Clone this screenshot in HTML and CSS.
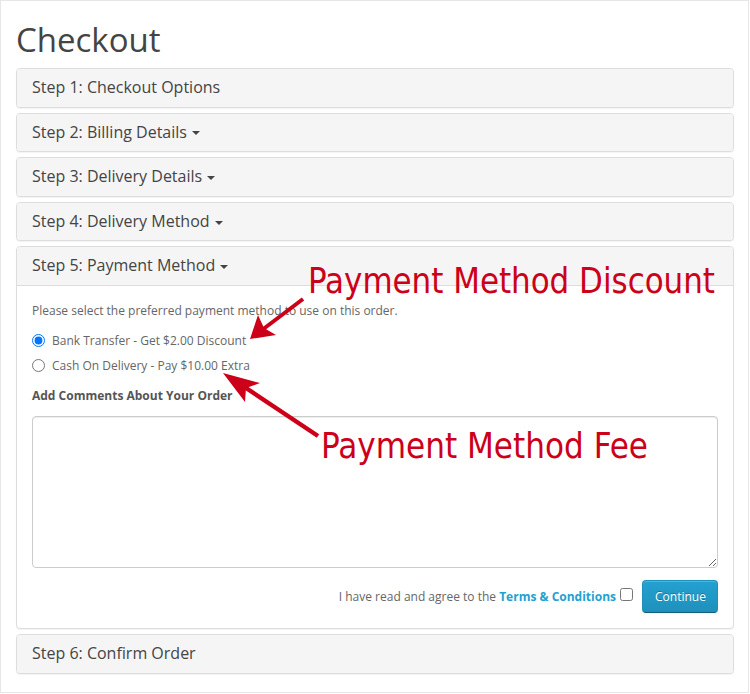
FILE: index.html
```html
<!DOCTYPE html>
<html lang="en">
<head>
<meta charset="utf-8">
<title>Checkout</title>
<link rel="stylesheet" href="styles.css">
</head>
<body>
<div class="frame">
  <h1 class="page-title">Checkout</h1>
  <div class="panel-group">
    <div class="panel">
      <div class="panel-heading"><h4 class="panel-title">Step 1: Checkout Options</h4></div>
    </div>
    <div class="panel">
      <div class="panel-heading"><h4 class="panel-title">Step 2: Billing Details <span class="caret"></span></h4></div>
    </div>
    <div class="panel">
      <div class="panel-heading"><h4 class="panel-title">Step 3: Delivery Details <span class="caret"></span></h4></div>
    </div>
    <div class="panel">
      <div class="panel-heading"><h4 class="panel-title">Step 4: Delivery Method <span class="caret"></span></h4></div>
    </div>
    <div class="panel">
      <div class="panel-heading open"><h4 class="panel-title">Step 5: Payment Method <span class="caret"></span></h4></div>
      <div class="panel-body">
        <p class="intro">Please select the preferred payment method to use on this order.</p>
        <label class="radio"><input type="radio" name="payment" checked> Bank Transfer - Get $2.00 Discount</label>
        <label class="radio second"><input type="radio" name="payment"> Cash On Delivery - Pay $10.00 Extra</label>
        <p class="comment-label"><strong>Add Comments About Your Order</strong></p>
        <textarea class="comment" rows="8"></textarea>
        <div class="buttons">
          <span class="agree">I have read and agree to the <a href="#" class="terms">Terms &amp; Conditions</a></span>
          <input type="checkbox" class="agree-box">
          <button type="button" class="btn-primary">Continue</button>
        </div>
      </div>
    </div>
    <div class="panel">
      <div class="panel-heading"><h4 class="panel-title">Step 6: Confirm Order</h4></div>
    </div>
  </div>

  <svg class="annotations" width="750" height="694" viewBox="0 0 750 694">
    <text class="note note-big" x="308" y="293" textLength="407" lengthAdjust="spacingAndGlyphs">Payment Method Discount</text>
    <text class="note note-small" x="321" y="458" textLength="327" lengthAdjust="spacingAndGlyphs">Payment Method Fee</text>
    <line class="shaft" x1="303" y1="299" x2="262" y2="330"/>
    <polygon class="head" points="250,339 258,315 264,328 276,335"/>
    <line class="shaft thick" x1="318" y1="436" x2="243" y2="386"/>
    <polygon class="head" points="223,373 260,383 246,388 245,402"/>
  </svg>
</div>
</body>
</html>
```
FILE: styles.css
```css
* { box-sizing: border-box; }

body {
  margin: 0;
  font-family: "Open Sans", "DejaVu Sans", sans-serif;
  font-size: 12px;
  line-height: 20px;
  color: #666;
  background: #fff;
}

.frame {
  position: relative;
  width: 749px;
  height: 693px;
  border: 1px solid #e6e6e6;
  padding: 20px 14px 0 15px;
}

.page-title {
  margin: 0 0 10px;
  font-size: 33px;
  font-weight: normal;
  line-height: 37px;
  color: #444;
}

.panel-group {
  display: flex;
  flex-direction: column;
  gap: 5px;
}

.panel {
  border: 1px solid #ddd;
  border-radius: 4px;
  background: #fff;
  box-shadow: 0 1px 1px rgba(0, 0, 0, 0.05);
  overflow: hidden;
}

.panel-heading {
  background: #f5f5f5;
  padding: 10px 15px;
}

.panel-heading.open {
  border-bottom: 1px solid #ddd;
}

.panel-title {
  margin: 0;
  font-size: 16px;
  font-weight: normal;
  line-height: 1.1;
  color: #444;
}

.caret {
  display: inline-block;
  width: 0;
  height: 0;
  border-left: 4.5px solid transparent;
  border-right: 4.5px solid transparent;
  border-top: 4.5px solid #444;
  vertical-align: middle;
  margin-left: 1px;
}

.panel-body {
  padding: 15px;
  display: flex;
  flex-direction: column;
}

.intro {
  margin: 0 0 10px;
}

.radio {
  display: flex;
  align-items: center;
  gap: 7px;
  margin: 0 0 5px;
  height: 20px;
}

.radio input {
  margin: 0;
  width: 13px;
  height: 13px;
}

.radio.second {
  margin-bottom: 10px;
}

.comment-label {
  margin: 0 0 10px;
  color: #555;
}

.comment {
  display: block;
  width: 686px;
  height: 152px;
  border: 1px solid #ccc;
  border-radius: 4px;
  box-shadow: inset 0 1px 1px rgba(0, 0, 0, 0.075);
  font-family: inherit;
  font-size: 12px;
  margin: 0 0 12px;
  resize: vertical;
}

.buttons {
  display: flex;
  justify-content: flex-end;
  align-items: center;
}

.agree {
  line-height: 20px;
  padding-top: 1px;
}

.terms {
  color: #23a1d1;
  font-weight: bold;
  text-decoration: none;
}

.agree-box {
  width: 13px;
  height: 13px;
  margin: 0 9px 4px 4px;
}

.btn-primary {
  font-family: inherit;
  font-size: 12px;
  line-height: 17px;
  padding: 7px 12px;
  color: #fff;
  text-shadow: 0 -1px 0 rgba(0, 0, 0, 0.25);
  background: linear-gradient(to bottom, #23a1d1, #1f90bb);
  border: 1px solid #1f90bb;
  border-bottom-color: #145e7a;
  border-radius: 4px;
  box-shadow: inset 0 1px 0 rgba(255, 255, 255, 0.2), 0 1px 2px rgba(0, 0, 0, 0.05);
  width: 76px;
  height: 33px;
}

.annotations {
  position: absolute;
  left: -1px;
  top: -1px;
  pointer-events: none;
}

.note {
  font-family: "DejaVu Sans Condensed", "DejaVu Sans", sans-serif;
  fill: #cc0019;
}

.note-big { font-size: 36px; }
.note-small { font-size: 35px; }

.shaft {
  stroke: #cc0019;
  stroke-width: 4px;
}

.shaft.thick { stroke-width: 4.5px; }

.head {
  fill: #cc0019;
}
```
